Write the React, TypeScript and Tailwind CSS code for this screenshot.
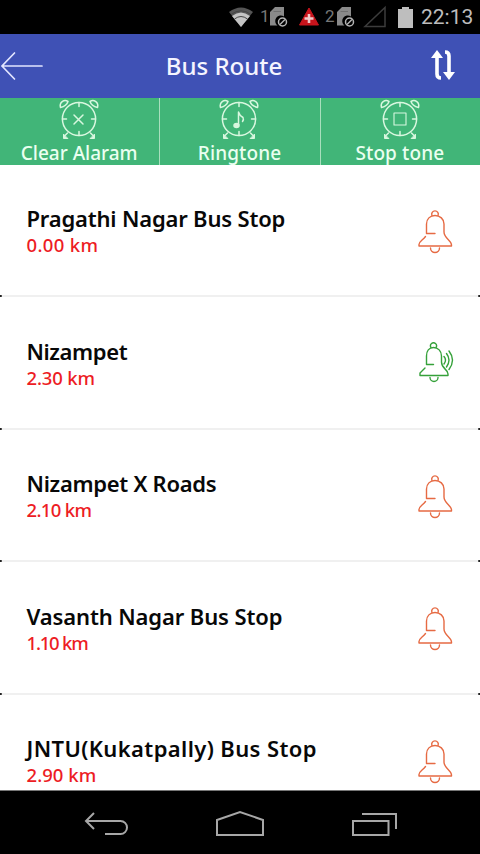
import type { ReactNode } from "react";

const stops = [
  { name: "Pragathi Nagar Bus Stop", distance: "0.00 km", spacing: "tracking-[-0.180px]", distanceSpacing: "tracking-[0.350px]", ringing: false },
  { name: "Nizampet", distance: "2.30 km", spacing: "tracking-[-0.400px]", distanceSpacing: "tracking-[-0.150px]", ringing: true },
  { name: "Nizampet X Roads", distance: "2.10 km", spacing: "tracking-[-0.300px]", distanceSpacing: "tracking-[-0.650px]", ringing: false },
  { name: "Vasanth Nagar Bus Stop", distance: "1.10 km", spacing: "tracking-[-0.120px]", distanceSpacing: "tracking-[-1.200px]", ringing: false },
  { name: "JNTU(Kukatpally) Bus Stop", distance: "2.90 km", spacing: "tracking-[0.380px]", distanceSpacing: "tracking-[0.050px]", ringing: false },
];

function SimIcon() {
  return (
    <svg width="20" height="24" viewBox="0 0 20 24" fill="none" className="shrink-0">
      <path d="M1 7 6 2H15V11.500A5.500 5.500 0 0 0 8.500 20.500H1Z" fill="#8a8a8a" />
      <path d="M4.500 6.500h7.500" stroke="#707070" />
      <circle cx="13.500" cy="17" r="4" stroke="#b5b5b5" strokeWidth="1.500" />
      <path d="m11 19.500 5-5" stroke="#b5b5b5" strokeWidth="1.500" />
    </svg>
  );
}

function StatusBar() {
  return (
    <div className="flex h-[34px] shrink-0 items-center bg-black pl-[228px] text-[#777]">
      <svg width="26" height="22" viewBox="0 0 26 22" className="shrink-0">
        <path d="M1 6Q13-3 25 6L13 21Z" fill="#555" />
        <path d="M4 10Q13 3 22 10L13 21Z" fill="#c4c4c4" />
        <path d="M3 8.500Q13 1 23 8.500M6.500 13Q13 8 19.500 13" fill="none" stroke="#444" />
      </svg>
      <span className="ml-[6px] w-[9px] text-[17px]">1</span>
      <SimIcon />
      <svg width="22" height="22" viewBox="0 0 22 22" className="ml-[9px] shrink-0">
        <path d="M11 2 20.500 19H1.500Z" fill="#c8141c" stroke="#c8141c" strokeLinejoin="round" />
        <path d="M11 8v9M6.500 12.500h9" stroke="#efcaca" strokeWidth="2.600" />
      </svg>
      <span className="ml-[5px] w-[11px] text-[17px]">2</span>
      <SimIcon />
      <svg width="25" height="24" viewBox="0 0 25 24" className="ml-[7px] shrink-0">
        <path d="M2 21.500H22V2.500Z" fill="none" stroke="#3c3c3c" strokeWidth="1.500" />
      </svg>
      <svg width="15" height="21" viewBox="0 0 15 21" className="ml-[10px] shrink-0">
        <path d="M4 0h7v2h4v19H0V2h4Z" fill="#bebebe" />
      </svg>
      <span className="ml-[8px] pt-[2px] text-[21px] text-[#bdbdbd]">22:13</span>
    </div>
  );
}

function AlarmClock({ children }: { children: ReactNode }) {
  return (
    <svg width="42" height="42" viewBox="0 0 42 42" fill="none" stroke="#d8f7df" strokeWidth="1.500" strokeLinecap="round" strokeLinejoin="round">
      <circle cx="21" cy="21" r="16.600" />
      <path d="M21 4.500v4M21 33.500v4M4.500 21h4M33.500 21h4" />
      <path d="M2.500 9.500C1 4.500 6 1 10 3.500Q8.500 8 2.500 9.500ZM39.500 9.500C41 4.500 36 1 32 3.500Q33.500 8 39.500 9.500Z" />
      <path d="m9.500 35-3 3M32.500 35l3 3" />
      <path d="M5.500 36.500v4h4ZM36.500 36.500v4h-4Z" fill="#d8f7df" strokeWidth="1" />
      {children}
    </svg>
  );
}

function Tool({ label, spacing, children, divided }: { label: string; spacing: string; children: ReactNode; divided?: boolean }) {
  return (
    <div className={`flex h-full flex-1 flex-col items-center pr-[1px] ${divided ? "border-r border-[#a8dfbd]" : ""}`}>
      <AlarmClock>{children}</AlarmClock>
      <span className={`mt-[3px] whitespace-nowrap text-[19px] leading-[20px] font-medium text-[#eafff0] ${spacing}`}>{label}</span>
    </div>
  );
}

function Bell({ ringing }: { ringing: boolean }) {
  if (ringing) {
    return (
      <svg width="36" height="42" viewBox="0 0 36 42" fill="none" stroke="#35a13a" strokeWidth="1.400" strokeLinecap="round" strokeLinejoin="round">
        <path d="M13 5.500a3 3 0 1 1 5 0" />
        <path d="M15.500 22.500H8.500V14C8.500 9 11 5.500 15.500 5.500S23.500 9 23.500 14V20C23.500 27 30 27 30 32V33.500H2V31L7 26" />
        <path d="M12 35.500a3.800 3.800 0 0 0 8 0" />
        <path d="M26 14.500q3 3.500 0 7.500M28.500 11.500q5 6.500 0 13.500M31 9q7 9 0 18.500" />
      </svg>
    );
  }
  return (
    <svg width="36" height="44" viewBox="0 0 36 44" fill="none" stroke="#e66a43" strokeWidth="1.400" strokeLinecap="round" strokeLinejoin="round">
      <path d="M14 5.500a3.300 3.300 0 1 1 6 0" />
      <path d="M17 23.500H8.500V14C8.500 9 12 5.500 17 5.500S26 9 26 14V22C26 28.500 33.500 30 33.500 35V36H1V34.500C1.500 31 4.500 30.500 7.500 26.500" />
      <path d="M12.500 38a4.500 4.500 0 0 0 9 0" />
    </svg>
  );
}

export default function App() {
  return (
    <div className="flex h-[854px] w-[480px] flex-col overflow-hidden bg-white font-['Noto_Sans',sans-serif]">
      <div className="shrink-0 font-[Roboto,sans-serif]"><StatusBar /></div>
      <header className="grid h-[63.500px] shrink-0 grid-cols-[100px_1fr_100px] items-center bg-[#3f51b5] text-[#f5f5ff]">
        <svg width="44" height="30" viewBox="0 0 44 30" fill="none" stroke="#e2e5ff" strokeWidth="1.700" strokeLinecap="round">
          <path d="M2 15H42M14.500 2 2 15 14.500 28" />
        </svg>
        <h1 className="pr-[32px] text-center text-[24px] leading-[32px] font-medium whitespace-nowrap">Bus Route</h1>
        <svg width="24" height="32" viewBox="0 0 24 32" fill="none" stroke="white" strokeWidth="3.600" strokeLinejoin="round" className="ml-[51px]">
          <path d="M6 7V24Q6 28 10 28M14 2Q18 2 18 6V23" />
          <path d="M0 8 6 0 12 8ZM12 22 18 30 24 22Z" fill="white" stroke="none" />
        </svg>
      </header>
      <nav className="flex h-[67px] shrink-0 bg-[#41b578]">
        <Tool label="Clear Alaram" spacing="tracking-[0px]" divided>
          <path d="m16 17 9 9M25 17l-9 9" />
        </Tool>
        <Tool label="Ringtone" spacing="tracking-[0.100px]" divided>
          <path d="M20.500 27V14q1 3.500 4.500 5.500 1 2-.5 4" />
          <ellipse cx="18.500" cy="27.500" rx="2.500" ry="2" fill="#d8f7df" />
        </Tool>
        <Tool label="Stop tone" spacing="tracking-[0.100px]">
          <path d="M15 15h12v12H15Z" strokeWidth="1.100" />
        </Tool>
      </nav>
      <main className="min-h-0 flex-1 overflow-hidden">
        {stops.map((stop) => (
          <div key={stop.name} className="relative flex h-[132.500px] items-start justify-between border-b-2 border-[#f0f0f0] pl-[26.500px] pr-[26px]">
            <div className="pt-[38.500px] whitespace-nowrap">
              <div className={`text-[22px] leading-[30px] font-semibold text-[#080808] ${stop.spacing}`}>{stop.name}</div>
              <div className={`pt-[1px] text-[18.500px] leading-[22px] font-medium text-[#ed1c24] ${stop.distanceSpacing}`}>{stop.distance}</div>
            </div>
            <div className="pt-[45px]"><Bell ringing={stop.ringing} /></div>
            <span className="absolute -bottom-[2px] left-0 size-[2px] rounded-r-full bg-[#222]" />
            <span className="absolute right-0 -bottom-[2px] size-[2px] rounded-l-full bg-[#222]" />
          </div>
        ))}
      </main>
      <footer className="flex h-[64px] shrink-0 items-start border-t border-[#777] bg-black pl-[84px] pt-[18px]">
        <svg width="46" height="30" viewBox="0 0 46 30" fill="none" stroke="#a7a7a7" strokeWidth="2">
          <path d="M10 4 2 12l8 8M2 12H36.500a6.500 6.500 0 0 1 0 13H21" />
        </svg>
        <svg width="52" height="30" viewBox="0 0 52 30" fill="none" stroke="#a7a7a7" strokeWidth="2" className="ml-[84px]">
          <path d="M3 11 26 3 49 11V26H3Z" />
        </svg>
        <svg width="50" height="30" viewBox="0 0 50 30" fill="none" stroke="#a7a7a7" strokeWidth="2" className="ml-[84px]">
          <path d="M3 12H38.500V26H3ZM12 5H46V20" />
        </svg>
      </footer>
    </div>
  );
}
